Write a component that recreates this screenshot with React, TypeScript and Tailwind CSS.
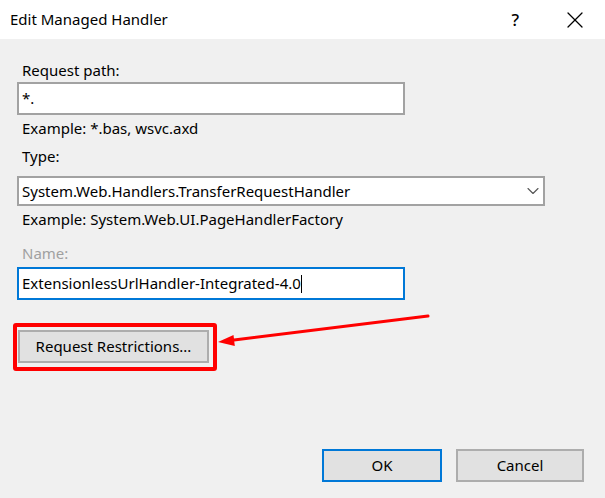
import { ChevronDown, X } from "lucide-react";

const App = () => {
  return (
    <div className="relative w-[605px] h-[498px] bg-[#f0f0f0] flex flex-col font-['Noto_Sans',sans-serif] text-[15px] text-black overflow-hidden">
      {/* title bar */}
      <div className="h-[39px] bg-white flex items-center pl-[10px] pr-[16px]">
        <span className="flex-1 text-[15px] leading-none">Edit Managed Handler</span>
        <span className="text-[17px] leading-none mr-[42px] font-medium">?</span>
        <X size={28} strokeWidth={1.1} />
      </div>

      <div className="flex flex-col pl-[17px]">
        <div className="mt-[21px] h-[20px] flex items-center pl-[5px] leading-none">Request path:</div>
        <div className="mt-[2px] h-[33px] w-[388px] bg-white border-2 border-[#a2a2a2] flex items-center pl-[3px] leading-none">*.</div>
        <div className="mt-[3px] h-[20px] flex items-center pl-[5px] leading-none">Example: *.bas, wsvc.axd</div>

        <div className="mt-[8px] h-[20px] flex items-center pl-[5px] leading-none">Type:</div>
        <div className="mt-[10px] h-[30px] w-[528px] bg-white border-2 border-[#a2a2a2] flex items-center pl-[3px] leading-none">
          <span className="flex-1">System.Web.Handlers.TransferRequestHandler</span>
          <ChevronDown size={20} strokeWidth={1.3} className="text-[#555]" />
        </div>
        <div className="mt-[3px] h-[20px] flex items-center pl-[5px] leading-none">Example: System.Web.UI.PageHandlerFactory</div>

        <div className="mt-[14px] h-[20px] flex items-center pl-[5px] leading-none text-[#a0a0a0]">Name:</div>
        <div className="mt-[4px] h-[33px] w-[388px] bg-white border-2 border-[#0078d7] flex items-center pl-[3px] leading-none">
          <span>ExtensionlessUrlHandler-Integrated-4.0</span>
          <span className="w-px h-[18px] bg-black" />
        </div>

        <div className="mt-[23px] ml-[-4px] w-[204px] h-[48px] border-4 border-[#ff0000] rounded-[3px] pt-[3px] pl-[1px]">
          <button className="w-[191px] h-[33px] bg-[#e1e1e1] border-2 border-[#adadad] leading-none">Request Restrictions...</button>
        </div>
      </div>

      <div className="mt-auto mb-[16px] flex justify-end gap-[14px] pr-[21px]">
        <button className="w-[120px] h-[33px] bg-[#e1e1e1] border-2 border-[#0078d7] leading-none">OK</button>
        <button className="w-[128px] h-[33px] bg-[#e1e1e1] border-2 border-[#adadad] leading-none">Cancel</button>
      </div>

      {/* annotation arrow */}
      <svg className="absolute left-[210px] top-[305px]" width="225" height="50" viewBox="0 0 225 50">
        <line x1="218" y1="11" x2="22" y2="35.2" stroke="#ff0000" strokeWidth="3" strokeLinecap="round" />
        <polygon points="8,37 23.5,30 24.8,41" fill="#ff0000" />
      </svg>
    </div>
  );
};

export default App;
